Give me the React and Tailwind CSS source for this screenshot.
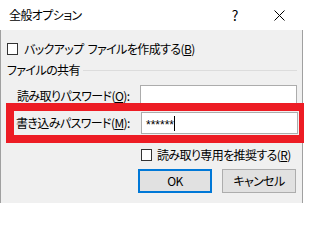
const font = "font-['Noto_Sans_CJK_JP','Noto_Sans',sans-serif] [font-feature-settings:'palt'] text-[12px] tracking-[-0.6px] leading-none text-black whitespace-nowrap";

function CheckBox() {
	return <div className="w-[11px] h-[12px] border border-[#333333] bg-white shrink-0" />;
}

export default function App() {
	return (
		<div className={`w-[304px] h-[203px] relative overflow-hidden bg-white ${font}`}>
			{/* title bar */}
			<div className="h-[30px] flex items-center pl-[9px] pr-[3px]">
				<div className="flex-1 text-[12px]">全般オプション</div>
				<div className="w-[44px] flex justify-center text-[14px] tracking-normal">?</div>
				<div className="w-[44px] flex justify-center">
					<svg width="11" height="11" viewBox="0 0 11 11">
						<path d="M0.5 0.5L10.5 10.5M10.5 0.5L0.5 10.5" stroke="#000" strokeWidth="1" />
					</svg>
				</div>
			</div>

			{/* body */}
			<div className="h-[173px] w-[303px] bg-[#f0f0f0] border-l border-r border-[#a0a0a0] flex flex-col">
				<div className="mt-[8px] h-[21px] flex items-center pl-[6px] gap-[6px]">
					<CheckBox />
					<span>
						バックアップ<span className="inline-block w-[4px]" />ファイルを作成する(<span className="underline">B</span>)
					</span>
				</div>

				<div className="mt-[3px] h-[16px] flex items-center pl-[6px] pr-[5px] gap-[3px]">
					<span>ファイルの共有</span>
					<div className="flex-1 h-px bg-[#dcdcdc]" />
				</div>

				<div className="mt-[7px] h-[22px] flex items-center pl-[16px]">
					<span className="w-[123px] shrink-0">
						読み取りパスワード(<span className="underline">O</span>):
					</span>
					<div className="w-[157px] h-[22px] shrink-0 bg-white border border-[#acacac]" />
				</div>

				<div className="mt-[5px] h-[22px] flex items-center pl-[15px]">
					<span className="w-[125px] shrink-0">
						書き込みパスワード(<span className="underline">M</span>):
					</span>
					<div className="w-[157px] h-[22px] shrink-0 bg-white border border-[#acacac] flex items-center pl-[4px]">
						<span className="font-['Liberation_Sans',sans-serif] text-[12px] tracking-normal pt-[4px]">******</span>
						<div className="w-px h-[15px] bg-black" />
					</div>
				</div>

				<div className="mt-[10px] h-[21px] flex items-center pl-[140px] gap-[5px]">
					<CheckBox />
					<span>
						読み取り専用を推奨する(<span className="underline">R</span>)
					</span>
				</div>

				<div className="mt-[4px] flex pl-[137px] gap-[10px]">
					<div className="w-[74px] h-[24px] bg-[#e1e1e1] border-2 border-[#0078d7] flex items-center justify-center">
						OK
					</div>
					<div className="w-[74px] h-[24px] bg-[#e1e1e1] border border-[#adadad] flex items-center justify-center">
						キャンセル
					</div>
				</div>
			</div>

			{/* red highlight annotation */}
			<div className="absolute left-[6px] top-[103px] w-[301px] h-[40px] border-[8px] border-[#ed1c24]" />
		</div>
	);
}
